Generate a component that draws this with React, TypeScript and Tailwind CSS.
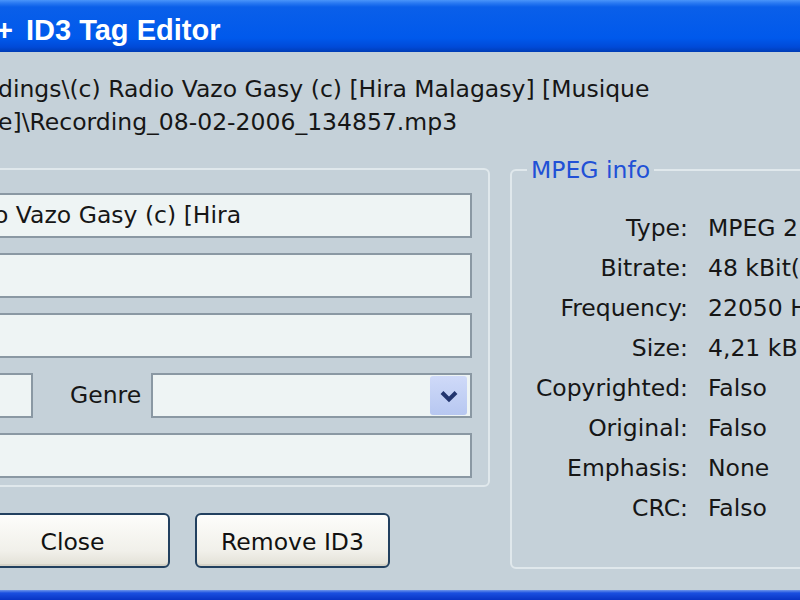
import React from 'react';

const fieldCls =
  'h-[45px] border-2 border-[#8a98a3] bg-[#eef4f4] flex items-center pl-[2px] overflow-hidden whitespace-nowrap';

const info = [
  { label: 'Type:', value: 'MPEG 2.5 Layer III' },
  { label: 'Bitrate:', value: '48 kBit(s)' },
  { label: 'Frequency:', value: '22050 Hz' },
  { label: 'Size:', value: '4,21 kB' },
  { label: 'Copyrighted:', value: 'Falso' },
  { label: 'Original:', value: 'Falso' },
  { label: 'Emphasis:', value: 'None' },
  { label: 'CRC:', value: 'Falso' },
];

const XpButton: React.FC<{ label: string }> = ({ label }) => (
  <button className="w-[195px] h-[55px] pt-[4px] rounded-[6px] border-2 border-[#22405f] bg-[linear-gradient(to_bottom,#fdfdfb,#f1f0ea_70%,#e2e0d6)] text-[#111] shadow-[inset_0_-2px_0_#d6d3c8]">
    {label}
  </button>
);

const App: React.FC = () => {
  return (
    <div className="w-[800px] h-[600px] overflow-hidden flex flex-col bg-[#c5d1d9] text-[#161616] font-['DejaVu_Sans',sans-serif] text-[23.5px]">
      {/* Title bar */}
      <div className="h-[52px] shrink-0 flex items-end pb-[6px] bg-[linear-gradient(to_bottom,#4a95fa_0px,#2a7af2_3px,#0a5fe9_7px,#0059ec_38px,#004ad8_47px,#003cb5_52px)]">
        <span className="-ml-[4px] font-['Liberation_Sans',Arial,sans-serif] font-bold text-[29px] leading-[31px] text-white whitespace-nowrap">
          <span className="mr-[5px]">+</span> ID3 Tag Editor
        </span>
      </div>

      <div className="flex-1 flex flex-col min-h-0">
        {/* File path */}
        <div className="mt-[21px] -ml-[2px] leading-[33px] whitespace-nowrap">
          <div>dings\(c) Radio Vazo Gasy (c) [Hira Malagasy] [Musique</div>
          <div>e]\Recording_08-02-2006_134857.mp3</div>
        </div>

        <div className="mt-[17px] flex items-start">
          {/* Tag fields */}
          <div className="-ml-[20px] w-[510px] shrink-0 mt-[12px]">
            <div className="h-[319px] border-2 border-[#e0e8ec] rounded-[6px] pt-[23px] pr-[16px] pl-[8px] flex flex-col gap-[15px]">
              <div className={fieldCls}>o Vazo Gasy (c) [Hira</div>
              <div className={fieldCls} />
              <div className={fieldCls} />
              <div className="h-[45px] flex items-center">
                <div className="w-[43px] h-[45px] border-2 border-[#8a98a3] bg-[#eef4f4]" />
                <span className="ml-[37px]">Genre</span>
                <div className="ml-[10px] flex-1 h-[45px] border-2 border-[#8a98a3] bg-[#eef4f4] flex justify-end items-center pr-[3px]">
                  <div className="w-[37px] h-[39px] rounded-[3px] bg-[linear-gradient(to_bottom,#cfdaf8,#b7c7f1)] flex items-center justify-center">
                    <svg width="20" height="14" viewBox="0 0 20 14">
                      <path d="M3 3.5 L10 10.5 L17 3.5" fill="none" stroke="#22356e" strokeWidth="4" />
                    </svg>
                  </div>
                </div>
              </div>
              <div className={fieldCls} />
            </div>

            <div className="mt-[26px] -ml-[5px] flex gap-[25px]">
              <XpButton label="Close" />
              <XpButton label="Remove ID3" />
            </div>
          </div>

          {/* MPEG info */}
          <fieldset className="ml-[20px] w-[330px] h-[413px] shrink-0 border-2 border-[#e0e8ec] rounded-[6px]">
            <legend className="ml-[15px] px-[4px] leading-[28px] text-[#2150d6]">MPEG info</legend>
            <div className="mt-[24px] grid grid-cols-[176px_auto] gap-x-[20px] leading-[40px] whitespace-nowrap">
              {info.map((row) => (
                <React.Fragment key={row.label}>
                  <span className="text-right">{row.label}</span>
                  <span>{row.value}</span>
                </React.Fragment>
              ))}
            </div>
          </fieldset>
        </div>

        <div className="flex-1" />
        {/* Window bottom frame */}
        <div className="h-[10px] shrink-0 bg-[linear-gradient(to_bottom,#6d95ea,#1a4fe0_3px,#0834c4_10px)]" />
      </div>
    </div>
  );
};

export default App;
